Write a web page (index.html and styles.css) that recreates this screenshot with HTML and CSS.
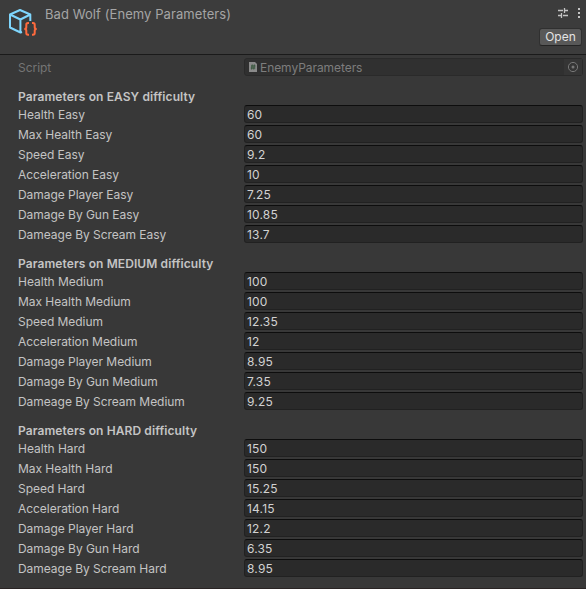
FILE: index.html
```html
<!DOCTYPE html>
<html lang="en">
<head>
<meta charset="utf-8">
<title>Inspector</title>
<link rel="stylesheet" href="styles.css">
</head>
<body>
<header class="header">
  <svg class="asset-icon" width="32" height="32" viewBox="0 0 32 32" fill="none">
    <path d="M17 27L15.500 27.500L5 22.500V9.500L15 5L25.300 9.500V16M5 9.500L15.400 14.500L25.300 9.500M15.400 14.500V27" stroke="#7fd6fd" stroke-width="2" stroke-linejoin="round"/>
    <path d="M24 18h-1q-1.700 0-1.700 1.700v2.500q0 1.700-2 1.700q2 0 2 1.700v2.400q0 1.700 1.700 1.700h1M27 18h1q1.700 0 1.700 1.700v2.500q0 1.700 2 1.700q-2 0-2 1.700v2.400q0 1.700-1.700 1.700h-1" stroke="#ff6a3d" stroke-width="2"/>
  </svg>
  <h1 class="title">Bad Wolf (Enemy Parameters)</h1>
  <div class="actions">
    <div class="tools">
      <svg width="12" height="12" viewBox="0 0 12 12" stroke="#c4c4c4" stroke-width="1.300">
        <path d="M1 3.500H6M8 3.500H11M7.500 1V6M1 8.500H4M6 8.500H11M4.500 6V11"/>
      </svg>
      <svg width="4" height="12" viewBox="0 0 4 12" fill="#c4c4c4">
        <path d="M1 1h2v2H1zM1 5h2v2H1zM1 9h2v2H1z"/>
      </svg>
    </div>
    <button class="open">Open</button>
  </div>
</header>
<main class="body">
  <div class="row script">
    <span class="label">Script</span>
    <div class="field object">
      <svg width="10" height="12" viewBox="0 0 10 12">
        <path d="M1 1h6l2 2v8H1z" fill="#8a8a8a"/>
        <path d="M4.200 3.500L3.700 8.500M6.300 3.500L5.800 8.500M3 5h4.500M2.800 7h4.500" stroke="#35553a" stroke-width="1"/>
      </svg>
      <span class="object-name">EnemyParameters</span>
      <span class="picker">
        <svg width="12" height="12" viewBox="0 0 12 12" fill="none">
          <circle cx="6" cy="6" r="4.600" stroke="#777"/>
          <circle cx="6" cy="6" r="1.500" fill="#777"/>
        </svg>
      </span>
    </div>
  </div>
  <section class="group">
    <h2 class="heading">Parameters on EASY difficulty</h2>
    <div class="row"><span class="label">Health Easy</span><div class="field">60</div></div>
    <div class="row"><span class="label">Max Health Easy</span><div class="field">60</div></div>
    <div class="row"><span class="label">Speed Easy</span><div class="field">9.2</div></div>
    <div class="row"><span class="label">Acceleration Easy</span><div class="field">10</div></div>
    <div class="row"><span class="label">Damage Player Easy</span><div class="field">7.25</div></div>
    <div class="row"><span class="label">Damage By Gun Easy</span><div class="field">10.85</div></div>
    <div class="row"><span class="label">Dameage By Scream Easy</span><div class="field">13.7</div></div>
  </section>
  <section class="group">
    <h2 class="heading">Parameters on MEDIUM difficulty</h2>
    <div class="row"><span class="label">Health Medium</span><div class="field">100</div></div>
    <div class="row"><span class="label">Max Health Medium</span><div class="field">100</div></div>
    <div class="row"><span class="label">Speed Medium</span><div class="field">12.35</div></div>
    <div class="row"><span class="label">Acceleration Medium</span><div class="field">12</div></div>
    <div class="row"><span class="label">Damage Player Medium</span><div class="field">8.95</div></div>
    <div class="row"><span class="label">Damage By Gun Medium</span><div class="field">7.35</div></div>
    <div class="row"><span class="label">Dameage By Scream Medium</span><div class="field">9.25</div></div>
  </section>
  <section class="group">
    <h2 class="heading">Parameters on HARD difficulty</h2>
    <div class="row"><span class="label">Health Hard</span><div class="field">150</div></div>
    <div class="row"><span class="label">Max Health Hard</span><div class="field">150</div></div>
    <div class="row"><span class="label">Speed Hard</span><div class="field">15.25</div></div>
    <div class="row"><span class="label">Acceleration Hard</span><div class="field">14.15</div></div>
    <div class="row"><span class="label">Damage Player Hard</span><div class="field">12.2</div></div>
    <div class="row"><span class="label">Damage By Gun Hard</span><div class="field">6.35</div></div>
    <div class="row"><span class="label">Dameage By Scream Hard</span><div class="field">8.95</div></div>
  </section>
</main>
</body>
</html>
```

FILE: styles.css
```css
* { box-sizing: border-box; }

body {
  margin: 0;
  height: 589px;
  overflow: hidden;
  display: flex;
  flex-direction: column;
  background: #383838;
  border-bottom: 1px solid #292424;
  color: #c4c4c4;
  font: 12px/18px Inter, "Liberation Sans", sans-serif;
}

.header {
  flex: none;
  display: flex;
  height: 55px;
  padding: 5px 4px 0 5px;
  background: #3c3c3c;
  border-bottom: 1px solid #1a1a1a;
}

.asset-icon { flex: none; overflow: visible; }

.title {
  flex: 1;
  margin: 0 0 0 8px;
  font-size: 13px;
  font-weight: 400;
  color: #a5a5a5;
  letter-spacing: 0.08px;
}

.actions { display: flex; flex-direction: column; align-items: flex-end; }
.tools { display: flex; gap: 8px; padding-top: 2px; height: 23px; margin-right: 1px; }

.open {
  width: 43px;
  height: 18px;
  padding: 0;
  border: 1px solid #303030;
  border-bottom-color: #242424;
  border-radius: 3px;
  background: #585858;
  color: #e4e4e4;
  font: inherit;
  line-height: 16px;
}

.body { padding: 3px 3px 0 18px; }

.row { display: flex; height: 20px; }
.label { flex: none; width: 226px; height: 20px; line-height: 20px; white-space: nowrap; letter-spacing: -0.04px; }

.field {
  flex: 1;
  height: 18px;
  padding: 0 2px;
  border: 1px solid #212121;
  border-top-color: #0d0d0d;
  border-radius: 3px;
  background: #2a2a2a;
  color: #d2d2d2;
  line-height: 18px;
  letter-spacing: 0.18px;
}

.script { color: #757575; }

.object {
  display: flex;
  align-items: center;
  padding: 0 0 0 3px;
  background: #303030;
  border-color: #2a2a2a;
  color: #7d7d7d;
  letter-spacing: -0.06px;
}

.object-name { flex: 1; margin-left: 2px; padding-top: 2px; }
.picker { display: flex; align-items: center; width: 18px; height: 16px; padding-left: 3px; background: #353535; }

.heading {
  margin: 0;
  height: 27px;
  padding-top: 10px;
  font-size: 12px;
  font-weight: 600;
  line-height: 18px;
  letter-spacing: 0.1px;
}
```
